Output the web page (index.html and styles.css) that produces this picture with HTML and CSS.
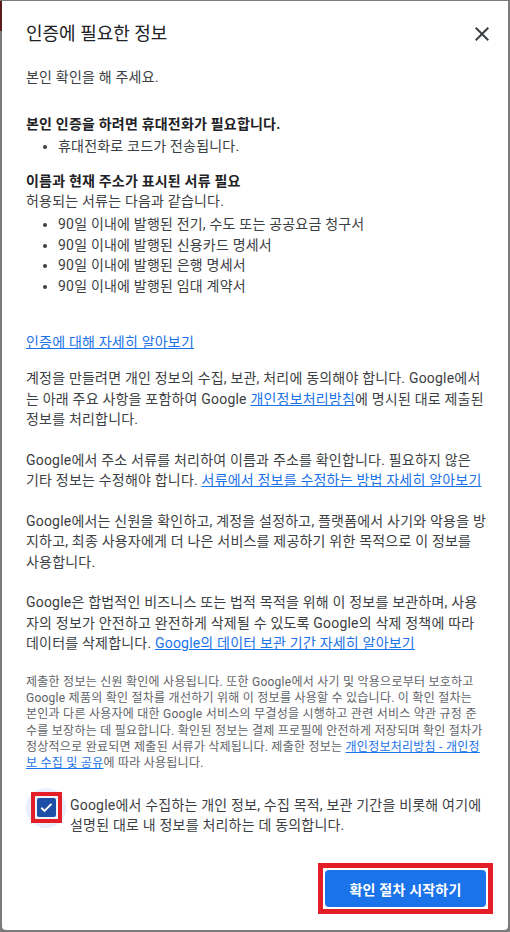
FILE: index.html
```html
<!DOCTYPE html>
<html lang="ko">
<head>
<meta charset="utf-8">
<title>인증에 필요한 정보</title>
<link rel="stylesheet" href="styles.css">
</head>
<body>
<div class="dialog">
  <header class="head">
    <h1 class="title">인증에 필요한 정보</h1>
    <button class="close" aria-label="닫기">
      <svg width="24" height="24" viewBox="0 0 24 24"><path d="M19 6.41L17.59 5 12 10.59 6.41 5 5 6.41 10.59 12 5 17.59 6.41 19 12 13.41 17.59 19 19 17.59 13.41 12z" fill="#3c4043"/></svg>
    </button>
  </header>
  <div class="content">
    <p class="intro">본인 확인을 해 주세요.</p>
    <section class="req">
      <h2 class="req-title">본인 인증을 하려면 휴대전화가 필요합니다.</h2>
      <ul class="list list-first"><li>휴대전화로 코드가 전송됩니다.</li></ul>
    </section>
    <section class="req req-docs">
      <h2 class="req-title">이름과 현재 주소가 표시된 서류 필요</h2>
      <p class="plain">허용되는 서류는 다음과 같습니다.</p>
      <ul class="list list-docs">
        <li>90일 이내에 발행된 전기, 수도 또는 공공요금 청구서</li>
        <li>90일 이내에 발행된 신용카드 명세서</li>
        <li>90일 이내에 발행된 은행 명세서</li>
        <li>90일 이내에 발행된 임대 계약서</li>
      </ul>
    </section>
    <a class="link more" href="#">인증에 대해 자세히 알아보기</a>
    <p class="para para-first">계정을 만들려면 개인 정보의 수집, 보관, 처리에 동의해야 합니다. Google에서는 아래 주요 사항을 포함하여 Google <a class="link" href="#">개인정보처리방침</a>에 명시된 대로 제출된 정보를 처리합니다.</p>
    <p class="para">Google에서 주소 서류를 처리하여 이름과 주소를 확인합니다. 필요하지 않은 기타 정보는 수정해야 합니다. <a class="link" href="#">서류에서 정보를 수정하는 방법 자세히 알아보기</a></p>
    <p class="para">Google에서는 신원을 확인하고, 계정을 설정하고, 플랫폼에서 사기와 악용을 방지하고, 최종 사용자에게 더 나은 서비스를 제공하기 위한 목적으로 이 정보를 사용합니다.</p>
    <p class="para">Google은 합법적인 비즈니스 또는 법적 목적을 위해 이 정보를 보관하며, 사용자의 정보가 안전하고 완전하게 삭제될 수 있도록 Google의 삭제 정책에 따라 데이터를 삭제합니다. <a class="link" href="#">Google의 데이터 보관 기간 자세히 알아보기</a></p>
    <p class="fine">제출한 정보는 신원 확인에 사용됩니다. 또한 Google에서 사기 및 악용으로부터 보호하고 Google 제품의 확인 절차를 개선하기 위해 이 정보를 사용할 수 있습니다. 이 확인 절차는 본인과 다른 사용자에 대한 Google 서비스의 무결성을 시행하고 관련 서비스 약관 규정 준수를 보장하는 데 필요합니다. 확인된 정보는 결제 프로필에 안전하게 저장되며 확인 절차가 정상적으로 완료되면 제출된 서류가 삭제됩니다. 제출한 정보는 <a class="link" href="#">개인정보처리방침 - 개인정보 수집 및 공유</a>에 따라 사용됩니다.</p>
    <div class="consent">
      <span class="cb-wrap">
        <span class="cb-mark">
          <span class="cb">
            <svg width="19" height="19" viewBox="0 0 19 19"><path d="M4.3 9.8l3.2 3.1 7-7" fill="none" stroke="#fff" stroke-width="2"/></svg>
          </span>
        </span>
      </span>
      <span class="consent-text">Google에서 수집하는 개인 정보, 수집 목적, 보관 기간을 비롯해 여기에 설명된 대로 내 정보를 처리하는 데 동의합니다.</span>
    </div>
  </div>
  <footer class="foot">
    <div class="btn-mark">
      <button class="primary">확인 절차 시작하기</button>
    </div>
  </footer>
</div>
</body>
</html>
```
FILE: styles.css
```css
html, body {
  margin: 0;
  padding: 0;
}
body {
  background-color: #7b7b7b;
  background-image: linear-gradient(#5b1e1e, #5b1e1e);
  background-size: 2px 30px;
  background-position: 0 1px;
  background-repeat: no-repeat;
  font-family: Roboto, "Noto Sans CJK KR", sans-serif;
  color: #3c4043;
  font-size: 14px;
  line-height: 20.5px;
  letter-spacing: 0.2px;
}
.dialog {
  margin: 1px 2px 2px 2px;
  min-height: 929px;
  box-sizing: border-box;
  background: #fff;
  border-radius: 0 0 4px 4px;
  padding-top: 19px;
  display: flex;
  flex-direction: column;
}
.head {
  display: flex;
  align-items: center;
  justify-content: space-between;
  padding: 0 14px 0 24px;
  height: 28px;
}
.title {
  margin: 0;
  font-size: 18px;
  font-weight: 400;
  line-height: 28px;
  letter-spacing: 0;
  color: #202124;
}
.close {
  border: 0;
  background: none;
  padding: 0;
  width: 24px;
  height: 24px;
  display: flex;
}
.content {
  padding: 0 22px 0 24px;
}
.intro {
  margin: 19px 0 0;
}
.req-title {
  margin: 0;
  font-size: 14px;
  font-weight: 700;
  line-height: 20.5px;
  color: #202124;
}
.req {
  margin-top: 26px;
}
.req-docs {
  margin-top: 14.5px;
}
.plain {
  margin: 0;
}
.list {
  margin: 1.5px 0 0;
  padding-left: 32px;
}
.list-docs {
  margin-top: 2.5px;
}
.link {
  color: #1a73e8;
  text-decoration: underline;
}
.more {
  display: block;
  width: fit-content;
  margin-top: 36px;
}
.para {
  margin: 20px 0 0;
}
.para-first {
  margin-top: 15.5px;
}
.fine {
  margin: 20.5px 0 0;
  font-size: 12px;
  line-height: 16.2px;
  letter-spacing: 0.25px;
  color: #5f6368;
}
.consent {
  display: flex;
  align-items: flex-start;
  gap: 4px;
  margin-top: 16.5px;
}
.cb-wrap {
  flex: none;
  width: 40px;
  height: 40px;
  border-radius: 50%;
  background: #e8f0fe;
  display: flex;
  align-items: center;
  justify-content: center;
}
.cb-mark {
  display: flex;
  border: 4px solid #e41e26;
  padding: 2px;
  background: #eef3fc;
}
.cb {
  width: 19px;
  height: 19px;
  background: #1c4fa6;
  border-radius: 2px;
  display: flex;
}
.consent-text {
  padding-top: 7.5px;
  line-height: 20px;
}
.foot {
  display: flex;
  justify-content: flex-end;
  padding: 0 15px 0 0;
  margin-top: 28px;
}
.btn-mark {
  display: flex;
  border: 5px solid #e41e26;
  padding: 2px;
  background: #fff;
}
.primary {
  width: 161px;
  height: 37px;
  border: 0;
  border-radius: 4px;
  background: #1a73e8;
  color: #fff;
  font-family: Roboto, "Noto Sans CJK KR", sans-serif;
  font-size: 14px;
  font-weight: 700;
  letter-spacing: 0.2px;
}
```
